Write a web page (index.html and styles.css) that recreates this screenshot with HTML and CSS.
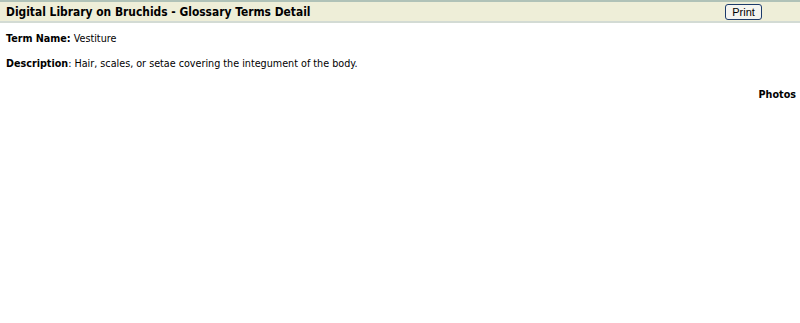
FILE: index.html
```html
<!DOCTYPE html>
<html lang="en">
<head>
  <meta charset="UTF-8" />
  <title>Glossary Terms Detail</title>
  <link rel="stylesheet" href="styles.css">
</head>
<body>
  <div class="header">
    <span class="title">Digital Library on Bruchids - Glossary Terms Detail</span>
    <button class="print-btn" onclick="window.print()">Print</button>
  </div>
  <div class="content">
    <p><b>Term Name:</b> Vestiture</p>
    <p><b>Description</b>: Hair, scales, or setae covering the integument of the body.</p>
    <div class="photos">Photos</div>
  </div>
</body>
</html>
```

FILE: styles.css
```css
body {
  margin: 0;
  font-family: 'DejaVu Sans Condensed', 'DejaVu Sans', Verdana, sans-serif;
  font-size: 10.7px;
  color: #000;
  background: #fff;
}
.header {
  display: flex;
  align-items: center;
  justify-content: space-between;
  height: 19px;
  padding: 0 38px 0 6px;
  background: #eeeed8;
  border-top: 2px solid #b0c2b8;
  border-bottom: 2px solid #d3dbd4;
}
.title {
  font-size: 11.9px;
  font-weight: bold;
}
.print-btn {
  font-family: 'Liberation Sans', Arial, sans-serif;
  font-size: 11px;
  width: 37px;
  height: 16px;
  padding: 0;
  background: #f4f4f0;
  border: 1px solid #1c3a6a;
  border-radius: 3px;
}
.content {
  padding: 0 4px 0 6px;
}
.content p {
  margin: 9px 0 12px;
}
.photos {
  text-align: right;
  font-weight: bold;
  margin-top: 18px;
}
```
